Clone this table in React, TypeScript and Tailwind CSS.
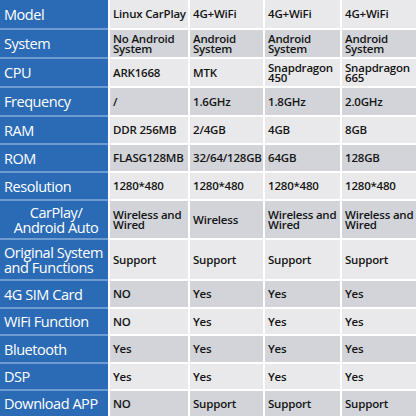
const rows: { label: string; h: string; cells: string[]; center?: boolean }[] = [
  { label: "Model", h: "h-[30px]", cells: ["Linux CarPlay", "4G+WiFi", "4G+WiFi", "4G+WiFi"] },
  { label: "System", h: "h-[29px]", cells: ["No Android\nSystem", "Android\nSystem", "Android\nSystem", "Android\nSystem"] },
  { label: "CPU", h: "h-[29px]", cells: ["ARK1668", "MTK", "Snapdragon\n450", "Snapdragon\n665"] },
  { label: "Frequency", h: "h-[29px]", cells: ["/", "1.6GHz", "1.8GHz", "2.0GHz"] },
  { label: "RAM", h: "h-[28px]", cells: ["DDR 256MB", "2/4GB", "4GB", "8GB"] },
  { label: "ROM", h: "h-[28px]", cells: ["FLASG128MB", "32/64/128GB", "64GB", "128GB"] },
  { label: "Resolution", h: "h-[28px]", cells: ["1280*480", "1280*480", "1280*480", "1280*480"] },
  { label: "CarPlay/\nAndroid Auto", h: "h-[39px]", center: true, cells: ["Wireless and\nWired", "Wireless", "Wireless and\nWired", "Wireless and\nWired"] },
  { label: "Original System\nand Functions", h: "h-[41px]", cells: ["Support", "Support", "Support", "Support"] },
  { label: "4G SIM Card", h: "h-[28px]", cells: ["NO", "Yes", "Yes", "Yes"] },
  { label: "WiFi Function", h: "h-[27px]", cells: ["NO", "Yes", "Yes", "Yes"] },
  { label: "Bluetooth", h: "h-[28px]", cells: ["Yes", "Yes", "Yes", "Yes"] },
  { label: "DSP", h: "h-[27px]", cells: ["Yes", "Yes", "Yes", "Yes"] },
  { label: "Download APP", h: "h-[25px]", cells: ["NO", "Support", "Support", "Support"] },
];

export default function App() {
  return (
    <div
      className="w-[416px] h-[416px] overflow-hidden bg-white"
      style={{ fontFamily: '"Open Sans", "Noto Sans", sans-serif' }}
    >
      <div className="grid grid-cols-[108px_78px_73px_75px_74px] gap-x-[2px]">
        {rows.map((row, i) => {
          const shade = i % 2 === 0 ? "bg-[#e9e9eb]" : "bg-[#d2d4da]";
          const last = i === rows.length - 1;
          return (
            <div key={i} className="contents">
              {/* label cell */}
              <div
                className={`${row.h} bg-[#2b6bb6] flex items-center pl-[4px] text-white text-[14.5px] font-medium leading-[15px] tracking-[-0.45px] whitespace-pre overflow-hidden ${
                  row.center ? "justify-center text-center pl-0" : ""
                } ${last ? "" : "border-b-2 border-[#6e9bd0]"}`}
              >
                {row.label}
              </div>
              {row.cells.map((c, j) => (
                <div
                  key={j}
                  className={`${row.h} ${shade} flex items-center pl-[3px] text-[#141414] text-[11.5px] font-semibold leading-[10px] tracking-[-0.2px] whitespace-pre overflow-hidden ${
                    last ? "" : "border-b-2 border-white"
                  }`}
                >
                  {c}
                </div>
              ))}
            </div>
          );
        })}
      </div>
    </div>
  );
}
